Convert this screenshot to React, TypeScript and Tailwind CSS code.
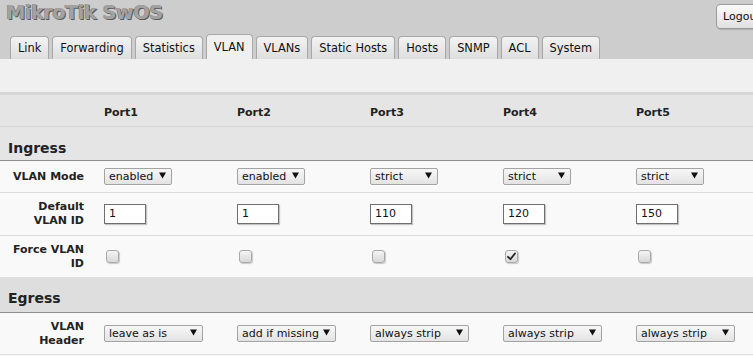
import React from "react";

const tabs = ["Link", "Forwarding", "Statistics", "VLAN", "VLANs", "Static Hosts", "Hosts", "SNMP", "ACL", "System"];

function Select({ value, w }: { value: string; w: string }) {
  return (
    <div
      className={`${w} h-[17px] flex items-center justify-between border border-[#a3a3a3] rounded-[2px] bg-gradient-to-b from-[#f7f7f7] to-[#e3e3e3] pl-[4px] pr-[5px] text-[11px] leading-[15px] text-[#111] shadow-[0_1px_0_#ffffff]`}
    >
      <span className="whitespace-nowrap">{value}</span>
      <svg width="7" height="7" viewBox="0 0 7 7" className="mb-[2px] ml-[4px] shrink-0">
        <polygon points="0,0.5 7,0.5 3.5,6.5" fill="#111" />
      </svg>
    </div>
  );
}

function Input({ value }: { value: string }) {
  return (
    <div className="w-[42px] h-[20px] border border-[#6f6f6f] bg-white pl-[4px] text-[11px] leading-[18px] text-[#111] shadow-[1px_1px_1px_#c4c4c4]">
      {value}
    </div>
  );
}

function Check({ checked }: { checked?: boolean }) {
  return (
    <div className="ml-[2px] w-[13px] h-[13px] rounded-[3px] border border-[#a9a9a9] bg-gradient-to-b from-[#f4f4f4] to-[#d9d9d9] shadow-[1px_1px_1px_#c8c8c8] flex items-center justify-center">
      {checked && (
        <svg width="9" height="9" viewBox="0 0 9 9">
          <path d="M1 4.8 L3.4 7.2 L8 1.5" stroke="#222" strokeWidth="1.8" fill="none" strokeLinecap="round" strokeLinejoin="round" />
        </svg>
      )}
    </div>
  );
}

const cols = "grid grid-cols-[104px_133px_133px_133px_133px_133px]";

function Label({ children }: { children: React.ReactNode }) {
  return (
    <div className="pl-[8px] pr-[20px] text-right font-bold text-[11px] leading-[14px] text-[#222]">{children}</div>
  );
}

export default function App() {
  return (
    <div className="w-[753px] h-[356px] overflow-hidden bg-[#f9f9f9] font-['DejaVu_Sans',Verdana,sans-serif] text-[#222]">
      {/* header */}
      <div className="bg-[#cdcdcd] h-[59px] flex flex-col">
        <div className="h-[34px] flex items-start">
          <div className="pl-[6px] pt-[1px] text-[19.5px] leading-[24px] font-bold tracking-[-0.6px] text-[#a2a2a2] [text-shadow:1px_1px_0_#5a5a5a,-0.5px_-0.5px_0_#7a7a7a]">
            MikroTik SwOS
          </div>
          <div className="ml-auto -mr-[19px] mt-[4px] w-[56px] h-[25px] rounded-[4px] border border-[#9a9a9a] bg-gradient-to-b from-[#fbfbfb] to-[#e0e0e0] pl-[6px] text-[11px] leading-[23px] text-[#111] shadow-[1px_1px_1px_#b0b0b0]">
            Logout
          </div>
        </div>
        <div className="flex items-end gap-[3px] pl-[10px] h-[25px]">
          {tabs.map((t) =>
            t === "VLAN" ? (
              <div
                key={t}
                className="h-[25px] px-[7px] border border-b-0 border-[#a8a8a8] rounded-t-[4px] bg-[#f0f0f0] text-[11.4px] leading-[25px] text-[#111]"
              >
                {t}
              </div>
            ) : (
              <div
                key={t}
                className="h-[23px] px-[7px] border border-b-0 border-[#a8a8a8] rounded-t-[4px] bg-gradient-to-b from-[#f3f3f3] to-[#dedede] text-[11.4px] leading-[23px] text-[#111]"
              >
                {t}
              </div>
            )
          )}
        </div>
      </div>
      {/* band */}
      <div className="h-[33px] bg-[#f0f0f0]" />
      <div className="h-[3px] bg-[#d6d6d6]" />
      {/* header row */}
      <div className={`${cols} h-[32px] bg-[#e5e5e5] border-b border-[#d6d6d6]`}>
        <div />
        {["Port1", "Port2", "Port3", "Port4", "Port5"].map((p) => (
          <div key={p} className="pt-[11px] font-bold text-[11px] leading-[14px]">
            {p}
          </div>
        ))}
      </div>
      {/* Ingress */}
      <div className="h-[34px] bg-[#e5e5e5] border-b border-[#8e8e8e] flex items-end pb-[4px] pl-[8px]">
        <span className="font-bold text-[14px] leading-[16px] text-[#222]">Ingress</span>
      </div>
      {/* VLAN Mode */}
      <div className={`${cols} h-[32px] items-center border-b border-[#dcdcdc]`}>
        <Label>VLAN Mode</Label>
        {["enabled", "enabled", "strict", "strict", "strict"].map((v, i) => (
          <div key={i}>
            <Select value={v} w="w-[68px]" />
          </div>
        ))}
      </div>
      {/* Default VLAN ID */}
      <div className={`${cols} h-[43px] items-center border-b border-[#dcdcdc]`}>
        <Label>
          Default
          <br />
          VLAN ID
        </Label>
        {["1", "1", "110", "120", "150"].map((v, i) => (
          <div key={i}>
            <Input value={v} />
          </div>
        ))}
      </div>
      {/* Force VLAN ID */}
      <div className={`${cols} h-[41px] items-center`}>
        <Label>
          Force VLAN
          <br />
          ID
        </Label>
        {[false, false, false, true, false].map((c, i) => (
          <div key={i}>
            <Check checked={c} />
          </div>
        ))}
      </div>
      {/* Egress */}
      <div className="h-[36px] bg-[#dedede] border-b border-[#8e8e8e] flex items-end pb-[6px] pl-[8px]">
        <span className="font-bold text-[14px] leading-[16px] text-[#222]">Egress</span>
      </div>
      {/* VLAN Header */}
      <div className={`${cols} h-[42px] items-center border-b border-[#dcdcdc]`}>
        <Label>
          VLAN
          <br />
          Header
        </Label>
        {["leave as is", "add if missing", "always strip", "always strip", "always strip"].map((v, i) => (
          <div key={i}>
            <Select value={v} w="w-[99px]" />
          </div>
        ))}
      </div>
    </div>
  );
}
